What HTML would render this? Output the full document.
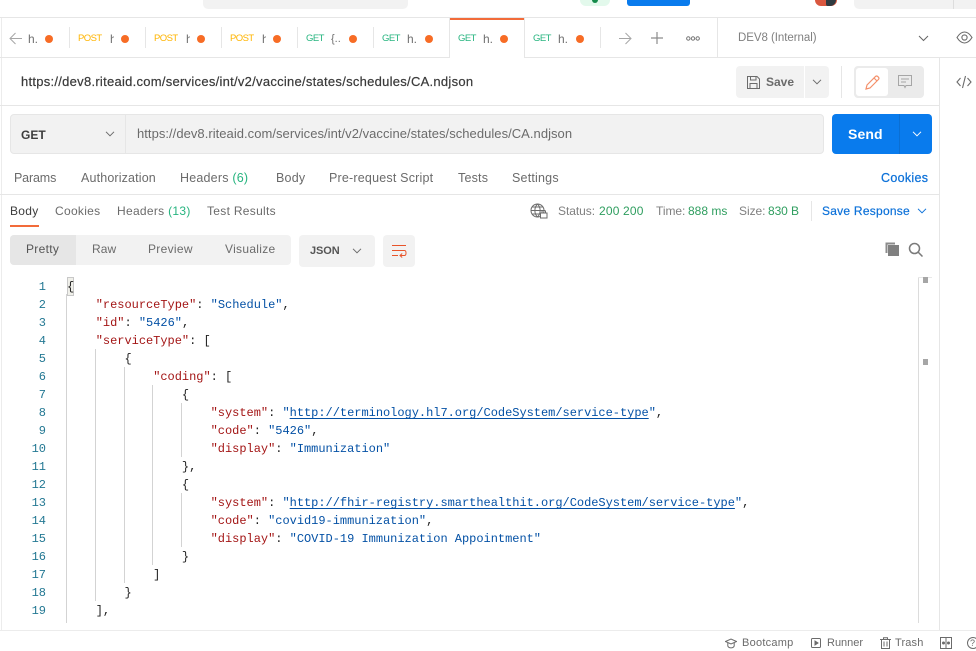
<!DOCTYPE html>
<html><head><meta charset="utf-8">
<style>
html,body{margin:0;padding:0;background:#fff}
body{width:976px;height:649px;position:relative;overflow:hidden;font-family:"Liberation Sans",sans-serif;font-size:12px;color:#6b6b6b}
.a{position:absolute}
.t{position:absolute;white-space:pre;line-height:16px}
.b{position:absolute;background:#e6e6e6}
.g{color:#26b47f}.o{color:#ffb400}.h{color:#707070}
.mt{font-size:9.5px;letter-spacing:-.55px;top:31px}
.cl{overflow:hidden;width:4px;font-size:12px;top:31px;color:#707070}
.tb{font-size:12.5px;letter-spacing:.2px;top:170px;color:#6b6b6b}
.dot{position:absolute;width:8px;height:8px;border-radius:50%;background:#f76c25;top:35px}
.m{position:absolute;white-space:pre;font-family:"Liberation Mono",monospace;font-size:12px;letter-spacing:-.02px;line-height:18px;color:#222}
.ln{position:absolute;width:46px;text-align:right;left:0;font-family:"Liberation Mono",monospace;font-size:12px;line-height:18px;color:#237893}
.k{color:#a31515}.s{color:#0451a5}.u{text-decoration:underline;text-underline-offset:2px;text-decoration-thickness:1px}
.i{position:absolute;width:1px;background:#d3d3d3}
svg{position:absolute;fill:none;stroke:#6b6b6b;stroke-width:1}
</style></head><body>

<!-- top strip -->
<div class="a" style="left:203px;top:0;width:205px;height:9px;background:#f2f2f2;border-radius:0 0 5px 5px"></div>
<div class="a" style="left:580px;top:0;width:30px;height:6px;background:#e3f9ec;border-radius:0 0 14px 14px"></div>
<div class="a" style="left:592px;top:0;width:6px;height:3px;background:#148a4a;border-radius:0 0 3px 3px"></div>
<div class="a" style="left:627px;top:0;width:63px;height:6px;background:#097bed;border-radius:0 0 3px 3px"></div>
<div class="a" style="left:815px;top:0;width:22px;height:6px;background:#d9573f;border-radius:0 0 11px 11px"></div>
<div class="a" style="left:826px;top:0;width:10px;height:6px;background:#2e3a40;border-radius:0 0 6px 2px"></div>
<div class="a" style="left:854px;top:0;width:122px;height:9px;background:#f2f2f2;border-radius:0 0 0 5px"></div>
<div class="b" style="left:953px;top:0;width:1px;height:9px;background:#ddd"></div>
<div class="b" style="left:0;top:17px;width:976px;height:1px"></div>

<!-- tab bar -->
<div class="b" style="left:1px;top:18px;width:1px;height:612px;background:#ececec"></div>
<div class="b" style="left:0;top:57px;width:450px;height:1px"></div>
<div class="b" style="left:524px;top:57px;width:452px;height:1px"></div>
<div class="b" style="left:449px;top:18px;width:1px;height:40px"></div>
<div class="b" style="left:524px;top:18px;width:1px;height:40px"></div>
<div class="a" style="left:450px;top:18px;width:74px;height:2px;background:#f26b3a"></div>
<div class="b" style="left:69px;top:27px;width:1px;height:21px"></div>
<div class="b" style="left:145px;top:27px;width:1px;height:21px"></div>
<div class="b" style="left:221px;top:27px;width:1px;height:21px"></div>
<div class="b" style="left:297px;top:27px;width:1px;height:21px"></div>
<div class="b" style="left:373px;top:27px;width:1px;height:21px"></div>
<div class="b" style="left:600px;top:27px;width:1px;height:21px"></div>
<div class="b" style="left:717px;top:18px;width:1px;height:39px"></div>

<svg style="left:9px;top:32px;stroke:#a6a6a6" width="14" height="13"><path d="M13 6.5H1M6.5 1L1 6.5L6.5 12"/></svg>
<span class="t" style="left:28px;top:31px;font-size:12px;color:#707070">h.</span><i class="dot" style="left:45px"></i>
<span class="t o mt" style="left:78px">POST</span><span class="t cl" style="left:110px">h</span><i class="dot" style="left:121px"></i>
<span class="t o mt" style="left:154px">POST</span><span class="t cl" style="left:186px">h</span><i class="dot" style="left:197px"></i>
<span class="t o mt" style="left:230px">POST</span><span class="t cl" style="left:262px">h</span><i class="dot" style="left:273px"></i>
<span class="t g mt" style="left:306px">GET</span><span class="t" style="left:331px;top:31px;font-size:11px;color:#707070">{..</span><i class="dot" style="left:349px"></i>
<span class="t g mt" style="left:382px">GET</span><span class="t" style="left:407px;top:31px;font-size:12px;color:#707070">h.</span><i class="dot" style="left:425px"></i>
<span class="t g mt" style="left:458px">GET</span><span class="t" style="left:483px;top:31px;font-size:12px;color:#707070">h.</span><i class="dot" style="left:500px"></i>
<span class="t g mt" style="left:533px">GET</span><span class="t" style="left:558px;top:31px;font-size:12px;color:#707070">h.</span><i class="dot" style="left:576px"></i>
<svg style="left:618px;top:32px;stroke:#a6a6a6" width="14" height="13"><path d="M1 6.5H13M7.5 1L13 6.5L7.5 12"/></svg>
<svg style="left:651px;top:32px;stroke:#8c8c8c;stroke-width:1.2" width="12" height="12"><path d="M6 0V12M0 6H12"/></svg>
<svg style="left:686px;top:35px;stroke:#777" width="14" height="7"><circle cx="2.3" cy="3.5" r="1.7"/><circle cx="7" cy="3.5" r="1.7"/><circle cx="11.7" cy="3.5" r="1.7"/></svg>
<span class="t" style="left:738px;top:30px;font-size:11.5px;letter-spacing:-.05px;color:#808080">DEV8 (Internal)</span>
<svg style="left:918px;top:35px;stroke:#666" width="11" height="7"><path d="M1 1L5.5 5.5L10 1"/></svg>
<svg style="left:956px;top:30px;stroke:#6b6b6b;stroke-width:1.1" width="17" height="15"><path d="M1 7.5C3.5 3.5 5.8 2 8.5 2S13.5 3.5 16 7.5C13.5 11.5 11.2 13 8.5 13S3.5 11.5 1 7.5Z"/><circle cx="8.5" cy="7.5" r="2.6"/></svg>

<!-- title row -->
<span class="t" style="left:21px;top:74px;font-size:13px;letter-spacing:.27px;color:#3a3a3a;-webkit-text-stroke:.2px #3a3a3a">https://dev8.riteaid.com/services/int/v2/vaccine/states/schedules/CA.ndjson</span>
<div class="a" style="left:736px;top:66px;width:68px;height:32px;background:#f2f2f2;border-radius:4px 0 0 4px"></div>
<div class="a" style="left:805px;top:66px;width:24px;height:32px;background:#f2f2f2;border-radius:0 4px 4px 0"></div>
<svg style="left:746px;top:75px;stroke:#6b6b6b" width="15" height="15"><path d="M1.5 1.5H11L13.5 4V13.5H1.5ZM4.5 1.5V5H10V1.5M4 13.5V8.5H11V13.5"/></svg>
<span class="t" style="left:766px;top:74px;font-size:12px;font-weight:bold;color:#6b6b6b">Save</span>
<svg style="left:812px;top:79px;stroke:#6b6b6b" width="10" height="6"><path d="M1 .8L5 4.8L9 .8"/></svg>
<div class="b" style="left:841px;top:66px;width:1px;height:32px"></div>
<div class="a" style="left:854px;top:66px;width:70px;height:32px;background:#ebebeb;border-radius:4px"></div>
<div class="a" style="left:856px;top:68px;width:32px;height:28px;background:#fff;border-radius:3px"></div>
<svg style="left:865px;top:75px;stroke:#f4906a;stroke-width:1.2" width="15" height="15"><path d="M1 14L2 10L10.5 1.5C11.2 .9 12 .9 12.8 1.6L13.4 2.2C14.1 3 14.1 3.8 13.4 4.5L5 13ZM9 3L12 6"/></svg>
<svg style="left:898px;top:75px;stroke:#a6a6a6" width="14" height="14"><path d="M.5 .5H13.5V10.5H8L7 12.5L6 10.5H.5ZM3 4H11M3 7H8"/></svg>
<svg style="left:956px;top:74px;stroke:#6b6b6b;stroke-width:1.1" width="16" height="16"><path d="M4.5 4L1 8L4.5 12M11.5 4L15 8L11.5 12M9.5 2L6.5 14"/></svg>

<div class="b" style="left:0;top:105px;width:939px;height:1px"></div>
<div class="b" style="left:939px;top:58px;width:1px;height:572px"></div>

<!-- url bar -->
<div class="a" style="left:10px;top:114px;width:812px;height:38px;background:#f2f2f2;border:1px solid #e6e6e6;border-radius:4px"></div>
<div class="b" style="left:125px;top:115px;width:1px;height:38px"></div>
<span class="t" style="left:21px;top:127px;font-size:12px;font-weight:bold;color:#3d3d3d">GET</span>
<svg style="left:105px;top:131px;stroke:#6b6b6b" width="10" height="6"><path d="M1 .8L5 4.8L9 .8"/></svg>
<span class="t" style="left:137px;top:126px;font-size:13px;letter-spacing:.04px;color:#6b6b6b">https://dev8.riteaid.com/services/int/v2/vaccine/states/schedules/CA.ndjson</span>
<div class="a" style="left:832px;top:114px;width:100px;height:40px;background:#097bed;border-radius:4px"></div>
<div class="a" style="left:899px;top:114px;width:1px;height:40px;background:#0a6fd4"></div>
<span class="t" style="left:848px;top:126px;font-size:14px;font-weight:bold;letter-spacing:.1px;color:#fff">Send</span>
<svg style="left:912px;top:131px;stroke:#fff" width="10" height="6"><path d="M1 .8L5 4.8L9 .8"/></svg>

<!-- request tabs -->
<span class="t tb" style="left:14px;letter-spacing:-.15px">Params</span>
<span class="t tb" style="left:81px;letter-spacing:.15px">Authorization</span>
<span class="t tb" style="left:180px">Headers <span style="color:#26b47f">(6)</span></span>
<span class="t tb" style="left:276px">Body</span>
<span class="t tb" style="left:329px">Pre-request Script</span>
<span class="t tb" style="left:458px">Tests</span>
<span class="t tb" style="left:512px">Settings</span>
<span class="t tb" style="left:881px;letter-spacing:.3px;color:#0c71d9;-webkit-text-stroke:.25px #0c71d9">Cookies</span>
<div class="b" style="left:0;top:194px;width:939px;height:1px"></div>

<!-- response tabs -->
<span class="t" style="left:10px;top:203px;letter-spacing:.3px;color:#3d3d3d">Body</span>
<div class="a" style="left:10px;top:225px;width:29px;height:2px;background:#f26b3a"></div>
<span class="t" style="left:55px;top:203px;letter-spacing:.3px;color:#6b6b6b">Cookies</span>
<span class="t" style="left:117px;top:203px;letter-spacing:.3px;color:#6b6b6b">Headers <span style="color:#26b47f">(13)</span></span>
<span class="t" style="left:207px;top:203px;letter-spacing:.3px;color:#6b6b6b">Test Results</span>

<svg style="left:530px;top:203px;stroke:#6b6b6b" width="18" height="16"><circle cx="7.5" cy="7.5" r="6.5"/><path d="M1 7.5H14M7.5 1C4 4.5 4 10.5 7.5 14M7.5 1C11 4.5 11 10.5 7.5 14M2 4H13M2 11H9"/><rect x="10.5" y="10" width="6.5" height="5" fill="#fff"/><path d="M12 10V8.5C12 7 15.5 7 15.5 8.5V10"/></svg>
<span class="t" style="left:558px;top:203px;font-size:12px;letter-spacing:-.05px;color:#808080">Status:</span>
<span class="t" style="left:599px;top:203px;font-size:12px;letter-spacing:.2px;color:#2f9e5f">200</span>
<span class="t" style="left:623px;top:203px;font-size:12px;letter-spacing:.2px;color:#2f9e5f">200</span>
<span class="t" style="left:656px;top:203px;font-size:12px;letter-spacing:-.05px;color:#808080">Time:</span>
<span class="t" style="left:688px;top:203px;font-size:12px;letter-spacing:0;color:#2f9e5f">888 ms</span>
<span class="t" style="left:739px;top:203px;font-size:12px;letter-spacing:-.05px;color:#808080">Size:</span>
<span class="t" style="left:768px;top:203px;font-size:12px;letter-spacing:-.1px;color:#2f9e5f">830 B</span>
<div class="b" style="left:811px;top:201px;width:1px;height:20px"></div>
<span class="t" style="left:822px;top:203px;letter-spacing:.25px;color:#0c71d9;-webkit-text-stroke:.2px #0c71d9">Save Response</span>
<svg style="left:917px;top:208px;stroke:#0c71d9" width="10" height="6"><path d="M1 .8L5 4.8L9 .8"/></svg>

<!-- format bar -->
<div class="a" style="left:10px;top:235px;width:281px;height:30px;background:#f2f2f2;border-radius:4px"></div>
<div class="a" style="left:10px;top:235px;width:66px;height:30px;background:#e6e6e6;border-radius:4px 0 0 4px"></div>
<span class="t" style="left:26px;top:241px;letter-spacing:.3px;color:#555">Pretty</span>
<span class="t" style="left:92px;top:241px;letter-spacing:.1px;color:#6b6b6b">Raw</span>
<span class="t" style="left:148px;top:241px;letter-spacing:.3px;color:#6b6b6b">Preview</span>
<span class="t" style="left:225px;top:241px;letter-spacing:.3px;color:#6b6b6b">Visualize</span>
<div class="a" style="left:299px;top:235px;width:76px;height:32px;background:#f2f2f2;border-radius:4px"></div>
<span class="t" style="left:310px;top:243px;font-size:11px;font-weight:bold;letter-spacing:-.1px;color:#555">JSON</span>
<svg style="left:352px;top:248px;stroke:#6b6b6b" width="10" height="6"><path d="M1 .8L5 4.8L9 .8"/></svg>
<div class="a" style="left:383px;top:235px;width:32px;height:32px;background:#f2f2f2;border-radius:4px"></div>
<svg style="left:391px;top:244px;stroke:#e8542a" width="16" height="14"><path d="M1 1.5H15M1 6.5H13.5C15.5 6.5 15.5 11.5 13.5 11.5H9M11.2 9.5L9 11.5L11.2 13.5M1 11.5H7"/></svg>
<svg style="left:885px;top:242px;stroke:none" width="15" height="15"><path d="M0.5 .5H10V2.5H2.5V11H.5Z" fill="#8c8c8c"/><rect x="3" y="3" width="11" height="11" fill="#808080"/></svg>
<svg style="left:908px;top:242px;stroke:#7a7a7a;stroke-width:1.5" width="15" height="15"><circle cx="6.5" cy="6.5" r="5"/><path d="M10 10L14.5 14.5"/></svg>

<!-- editor -->
<div class="a" style="left:67px;top:277px;width:5px;height:17px;background:#f0f0ea;border:1px solid #c8c8c8;box-sizing:content-box"></div>
<i class="i" style="left:66px;top:294px;height:329px"></i>
<i class="i" style="left:95px;top:349px;height:252px"></i>
<i class="i" style="left:124px;top:367px;height:216px"></i>
<i class="i" style="left:152px;top:385px;height:180px"></i>
<i class="i" style="left:181px;top:403px;height:54px"></i>
<i class="i" style="left:181px;top:493px;height:54px"></i>

<div class="ln" style="top:278px">1</div><div class="ln" style="top:296px">2</div><div class="ln" style="top:314px">3</div><div class="ln" style="top:332px">4</div><div class="ln" style="top:350px">5</div><div class="ln" style="top:368px">6</div><div class="ln" style="top:386px">7</div><div class="ln" style="top:404px">8</div><div class="ln" style="top:422px">9</div><div class="ln" style="top:440px">10</div><div class="ln" style="top:458px">11</div><div class="ln" style="top:476px">12</div><div class="ln" style="top:494px">13</div><div class="ln" style="top:512px">14</div><div class="ln" style="top:530px">15</div><div class="ln" style="top:548px">16</div><div class="ln" style="top:566px">17</div><div class="ln" style="top:584px">18</div><div class="ln" style="top:602px">19</div>

<div class="m" style="left:67px;top:278px">{</div>
<div class="m" style="left:67px;top:296px">    <span class="k">"resourceType"</span>: <span class="s">"Schedule"</span>,</div>
<div class="m" style="left:67px;top:314px">    <span class="k">"id"</span>: <span class="s">"5426"</span>,</div>
<div class="m" style="left:67px;top:332px">    <span class="k">"serviceType"</span>: [</div>
<div class="m" style="left:67px;top:350px">        {</div>
<div class="m" style="left:67px;top:368px">            <span class="k">"coding"</span>: [</div>
<div class="m" style="left:67px;top:386px">                {</div>
<div class="m" style="left:67px;top:404px">                    <span class="k">"system"</span>: <span class="s">"<span class="u">http://terminology.hl7.org/CodeSystem/service-type</span>"</span>,</div>
<div class="m" style="left:67px;top:422px">                    <span class="k">"code"</span>: <span class="s">"5426"</span>,</div>
<div class="m" style="left:67px;top:440px">                    <span class="k">"display"</span>: <span class="s">"Immunization"</span></div>
<div class="m" style="left:67px;top:458px">                },</div>
<div class="m" style="left:67px;top:476px">                {</div>
<div class="m" style="left:67px;top:494px">                    <span class="k">"system"</span>: <span class="s">"<span class="u">http://fhir-registry.smarthealthit.org/CodeSystem/service-type</span>"</span>,</div>
<div class="m" style="left:67px;top:512px">                    <span class="k">"code"</span>: <span class="s">"covid19-immunization"</span>,</div>
<div class="m" style="left:67px;top:530px">                    <span class="k">"display"</span>: <span class="s">"COVID-19 Immunization Appointment"</span></div>
<div class="m" style="left:67px;top:548px">                }</div>
<div class="m" style="left:67px;top:566px">            ]</div>
<div class="m" style="left:67px;top:584px">        }</div>
<div class="m" style="left:67px;top:602px">    ],</div>

<!-- scrollbar -->
<div class="b" style="left:918px;top:277px;width:1px;height:346px;background:#dcdcdc"></div>
<div class="b" style="left:918px;top:277px;width:14px;height:1px;background:#e8e8e8"></div>
<div class="a" style="left:923px;top:277px;width:5px;height:6px;background:#a6a6a6"></div>
<div class="a" style="left:923px;top:359px;width:5px;height:6px;background:#a6a6a6"></div>

<!-- status bar -->
<div class="b" style="left:0;top:630px;width:976px;height:1px;background:#ececec"></div>
<svg style="left:725px;top:638px;stroke:#6b6b6b" width="12" height="11"><path d="M.5 3.5L6 1L11.5 3.5L6 6ZM2.8 5V8C4 10.5 8 10.5 9.2 8V5"/></svg>
<span class="t" style="left:742px;top:635px;font-size:11px;letter-spacing:.25px;color:#6b6b6b">Bootcamp</span>
<svg style="left:811px;top:638px;stroke:#6b6b6b" width="10" height="10"><rect x=".5" y=".5" width="9" height="9" rx="1"/><path d="M4 3L7 5L4 7Z" fill="#6b6b6b"/></svg>
<span class="t" style="left:827px;top:635px;font-size:11px;letter-spacing:0;color:#6b6b6b">Runner</span>
<svg style="left:880px;top:637px;stroke:#6b6b6b" width="11" height="12"><path d="M0 2.5H11M3.5 2.5V.7H7.5V2.5M1.5 2.5V11.5H9.5V2.5M4 4.5V9.5M7 4.5V9.5"/></svg>
<span class="t" style="left:895px;top:635px;font-size:11px;letter-spacing:.15px;color:#6b6b6b">Trash</span>
<svg style="left:940px;top:637px;stroke:#6b6b6b" width="12" height="12"><rect x=".5" y=".5" width="11" height="11"/><path d="M6 .5V11.5"/><circle cx="3.5" cy="6" r="1" fill="#6b6b6b"/><circle cx="8.5" cy="6" r="1" fill="#6b6b6b"/></svg>
<svg style="left:967px;top:637px;stroke:#6b6b6b" width="9" height="12"><circle cx="6" cy="6" r="5.5"/></svg>
<span class="t" style="left:970px;top:636px;font-size:9px;line-height:14px;color:#6b6b6b">?</span>
</body></html>
